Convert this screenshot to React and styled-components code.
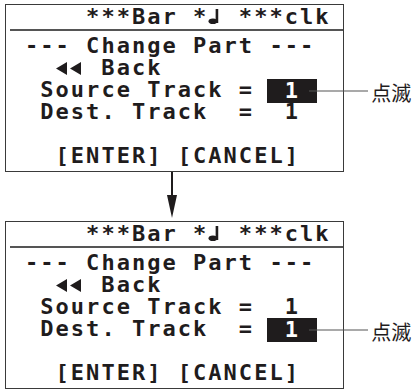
import React from 'react'
import styled, { createGlobalStyle } from 'styled-components'

const ink = '#1f1c1d'
const cell = 15.27

const GlobalStyle = createGlobalStyle`
  html, body {
    margin: 0;
    background: #fff;
  }
`

const Page = styled.div`
  display: flex;
  flex-direction: column;
  align-items: flex-start;
  padding: 4px 0 0 5px;
  width: 412px;
  height: 390px;
  box-sizing: border-box;
`

const Panel = styled.div`
  width: 339px;
  height: 168px;
  box-sizing: border-box;
  border: 1px solid #3a3a3a;
  padding: 1px 0 0 19px;
  font-family: 'DejaVu Sans Mono', 'Liberation Mono', monospace;
  font-weight: bold;
  font-size: 22px;
  letter-spacing: ${cell - 13.24}px;
  color: ${ink};
`

const Row = styled.div`
  height: 22px;
  line-height: 22px;
  white-space: pre;
`

const Rule = styled.div`
  height: 2px;
  margin: 1px 0 4px -15px;
  background: #555;
`

const Glyph = styled.svg`
  display: inline-block;
  vertical-align: baseline;
  width: ${p => p.$cells * cell}px;
`

const Blink = styled.span`
  position: relative;
  display: inline-block;
  vertical-align: top;
  height: 24px;
  line-height: 24px;
  background: ${ink};
  color: #fff;
  padding: 0 2px;
  margin-left: -2px;
`

const Callout = styled.span`
  position: absolute;
  left: calc(100% - 8px);
  top: 50%;
  display: flex;
  align-items: center;
  transform: translateY(-50%);
  letter-spacing: 0;
`

const Leader = styled.span`
  display: block;
  width: 59px;
  height: 1px;
  background: #555;
`

const Label = styled.span`
  margin-left: 3px;
  padding-top: 3px;
  font-family: 'Noto Sans CJK JP', 'Noto Sans', sans-serif;
  font-weight: normal;
  font-size: 20px;
  line-height: 1;
  color: ${ink};
  white-space: nowrap;
`

const ArrowWrap = styled.svg`
  display: block;
  margin-left: 161px;
`

const Note = () => (
  <Glyph $cells={1} height="15" viewBox="0 0 15 15">
    <rect x="7.5" y="0" width="2.6" height="14" fill={ink} />
    <ellipse cx="4.8" cy="12.2" rx="4.4" ry="2.8" fill={ink} />
  </Glyph>
)

const Rewind = () => (
  <Glyph $cells={2} height="13" viewBox="0 0 30.5 13">
    <polygon points="0,6.5 11,0 11,13" fill={ink} />
    <polygon points="14,6.5 25,0 25,13" fill={ink} />
  </Glyph>
)

const Value = ({ blink }) =>
  blink ? (
    <Blink>
      {' 1 '}
      <Callout>
        <Leader />
        <Label>点滅</Label>
      </Callout>
    </Blink>
  ) : (
    <span>{' 1 '}</span>
  )

const Screen = ({ blinkRow }) => (
  <Panel>
    <Row>
      {'    ***Bar *'}
      <Note />
      {' ***clk'}
    </Row>
    <Rule />
    <Row>{'--- Change Part ---'}</Row>
    <Row>
      {'  '}
      <Rewind />
      {' Back'}
    </Row>
    <Row>
      {' Source Track = '}
      <Value blink={blinkRow === 'source'} />
    </Row>
    <Row>
      {' Dest. Track  = '}
      <Value blink={blinkRow === 'dest'} />
    </Row>
    <Row />
    <Row>{'  [ENTER] [CANCEL]'}</Row>
  </Panel>
)

const Arrow = () => (
  <ArrowWrap width="12" height="49" viewBox="0 0 12 49">
    <rect x="5" y="0" width="2" height="25" fill={ink} />
    <polygon points="1,23 11,23 6,46" fill={ink} />
  </ArrowWrap>
)

export default function App() {
  return (
    <Page>
      <GlobalStyle />
      <Screen blinkRow="source" />
      <Arrow />
      <Screen blinkRow="dest" />
    </Page>
  )
}
